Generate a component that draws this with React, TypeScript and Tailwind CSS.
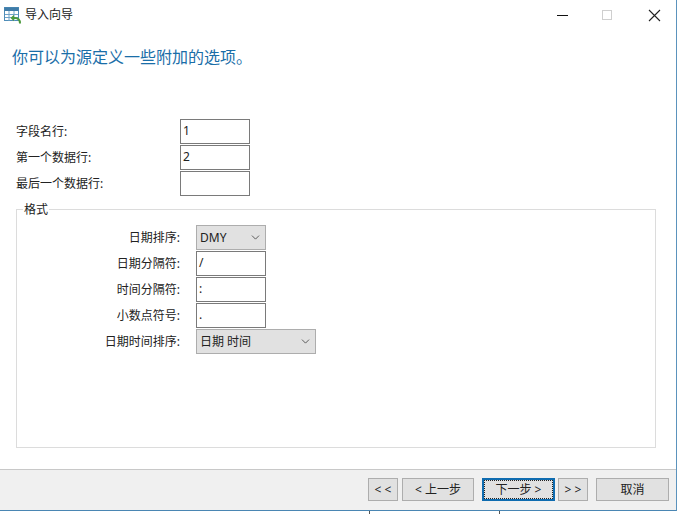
import { ChevronDown } from 'lucide-react';

const font = "font-['Noto_Sans','Noto_Sans_CJK_SC',sans-serif]";

function TextBox({ value, width = 'w-[70px]' }: { value?: string; width?: string }) {
  return (
    <div className={`${width} h-[25px] border border-[#7a7a7a] bg-white pl-[2px] text-[12px] leading-[21px] text-[#222]`}>
      {value}
    </div>
  );
}

function Combo({ value, width }: { value: string; width: string }) {
  return (
    <div className={`${width} h-[25px] border border-[#adadad] bg-[#e1e1e1] pl-[3px] pr-[3px] flex items-center justify-between text-[12px] text-[#222]`}>
      <span>{value}</span>
      <ChevronDown size={13} strokeWidth={1.4} className="text-[#333]" />
    </div>
  );
}

function FormatRow({ label, children }: { label: string; children: React.ReactNode }) {
  return (
    <div className="flex items-center h-[25px] mb-px">
      <div className="w-[163px] text-right text-[12px] text-[#222]">{label}</div>
      <div className="ml-[16px]">{children}</div>
    </div>
  );
}

function NavButton({ label, width, primary }: { label: string; width: string; primary?: boolean }) {
  return (
    <button
      className={`${width} h-[23px] bg-[#e1e1e1] text-[12px] text-[#222] flex items-center justify-center ${
        primary ? 'border-2 border-[#0f6cb0] outline outline-1 -outline-offset-3 outline-dotted outline-[#222]' : 'border border-[#adadad]'
      }`}
    >
      {label}
    </button>
  );
}

export default function App() {
  return (
    <div className={`${font} w-[678px] h-[514px] bg-white overflow-hidden flex flex-col`}>
      <div className="w-[677px] h-[511px] border-r border-r-[#5b93bd] border-b border-b-[#4a86b3] flex flex-col">
        <div className="h-[30px] flex items-center shrink-0 pl-[4px]">
          <svg width="17" height="17" viewBox="0 0 17 17" className="shrink-0">
            <rect x="0.5" y="0.5" width="14" height="13" fill="#fff" stroke="#4f8db8" />
            <rect x="0.5" y="0.5" width="14" height="3.5" fill="#3f7ca8" />
            <path d="M5 4v10M10 4v10M1 7.5h13M1 10.5h13" stroke="#6fa3c8" />
            <path d="M16 16.5c0-3.5-2-5.5-5-5.5H9" fill="none" stroke="#4c9a3c" strokeWidth="2" />
            <path d="M6.5 11l3.5-3.2v6.4z" fill="#4c9a3c" />
          </svg>
          <span className="ml-[4px] text-[12px] text-[#222]">导入向导</span>
          <div className="ml-auto flex items-center">
            <div className="w-[11px] h-px bg-[#111] mr-[34px]" />
            <div className="w-[10px] h-[10px] border border-[#cfcfcf] mr-[36px]" />
            <svg width="13" height="13" viewBox="0 0 13 13" className="mr-[15px]">
              <path d="M1 1l11 11M12 1L1 12" stroke="#222" strokeWidth="1.1" />
            </svg>
          </div>
        </div>

        <div className="pl-[12px] h-[24px] mt-[15px] text-[16px] leading-[24px] text-[#1a6ea8] shrink-0">
          你可以为源定义一些附加的选项。
        </div>

        <div className="pl-[16px] mt-[50px] shrink-0 flex flex-col gap-px">
          {[
            ['字段名行:', '1'],
            ['第一个数据行:', '2'],
            ['最后一个数据行:', ''],
          ].map(([label, value]) => (
            <div key={label} className="flex items-center h-[25px]">
              <div className="w-[164px] text-[12px] text-[#222]">{label}</div>
              <TextBox value={value} />
            </div>
          ))}
        </div>

        <fieldset className="ml-[16px] mr-[20px] mt-[5px] h-[247px] border border-[#dcdcdc] shrink-0">
          <legend className="ml-[6px] px-px pt-[2px] text-[12px] leading-[14px] text-[#222]">格式</legend>
          <div className="mt-[8px]">
            <FormatRow label="日期排序:">
              <Combo value="DMY" width="w-[70px]" />
            </FormatRow>
            <FormatRow label="日期分隔符:">
              <TextBox value="/" />
            </FormatRow>
            <FormatRow label="时间分隔符:">
              <TextBox value=":" />
            </FormatRow>
            <FormatRow label="小数点符号:">
              <TextBox value="." />
            </FormatRow>
            <FormatRow label="日期时间排序:">
              <Combo value="日期 时间" width="w-[120px]" />
            </FormatRow>
          </div>
        </fieldset>

        <div className="mt-auto h-[41px] bg-[#f0f0f0] border-t border-t-[#c8c8c8] flex items-start pt-[8px] pl-[368px] shrink-0">
          <NavButton label="< <" width="w-[30px]" />
          <div className="w-[4px]" />
          <NavButton label="< 上一步" width="w-[72px]" />
          <div className="w-[8px]" />
          <NavButton label="下一步 >" width="w-[73px]" primary />
          <div className="w-[3px]" />
          <NavButton label="> >" width="w-[30px]" />
          <div className="w-[8px]" />
          <NavButton label="取消" width="w-[73px]" />
        </div>
      </div>
      <div className="h-[3px] flex shrink-0">
        <div className="ml-[369px] w-px h-full bg-[#555]" />
        <div className="ml-[129px] w-px h-full bg-[#555]" />
      </div>
    </div>
  );
}
